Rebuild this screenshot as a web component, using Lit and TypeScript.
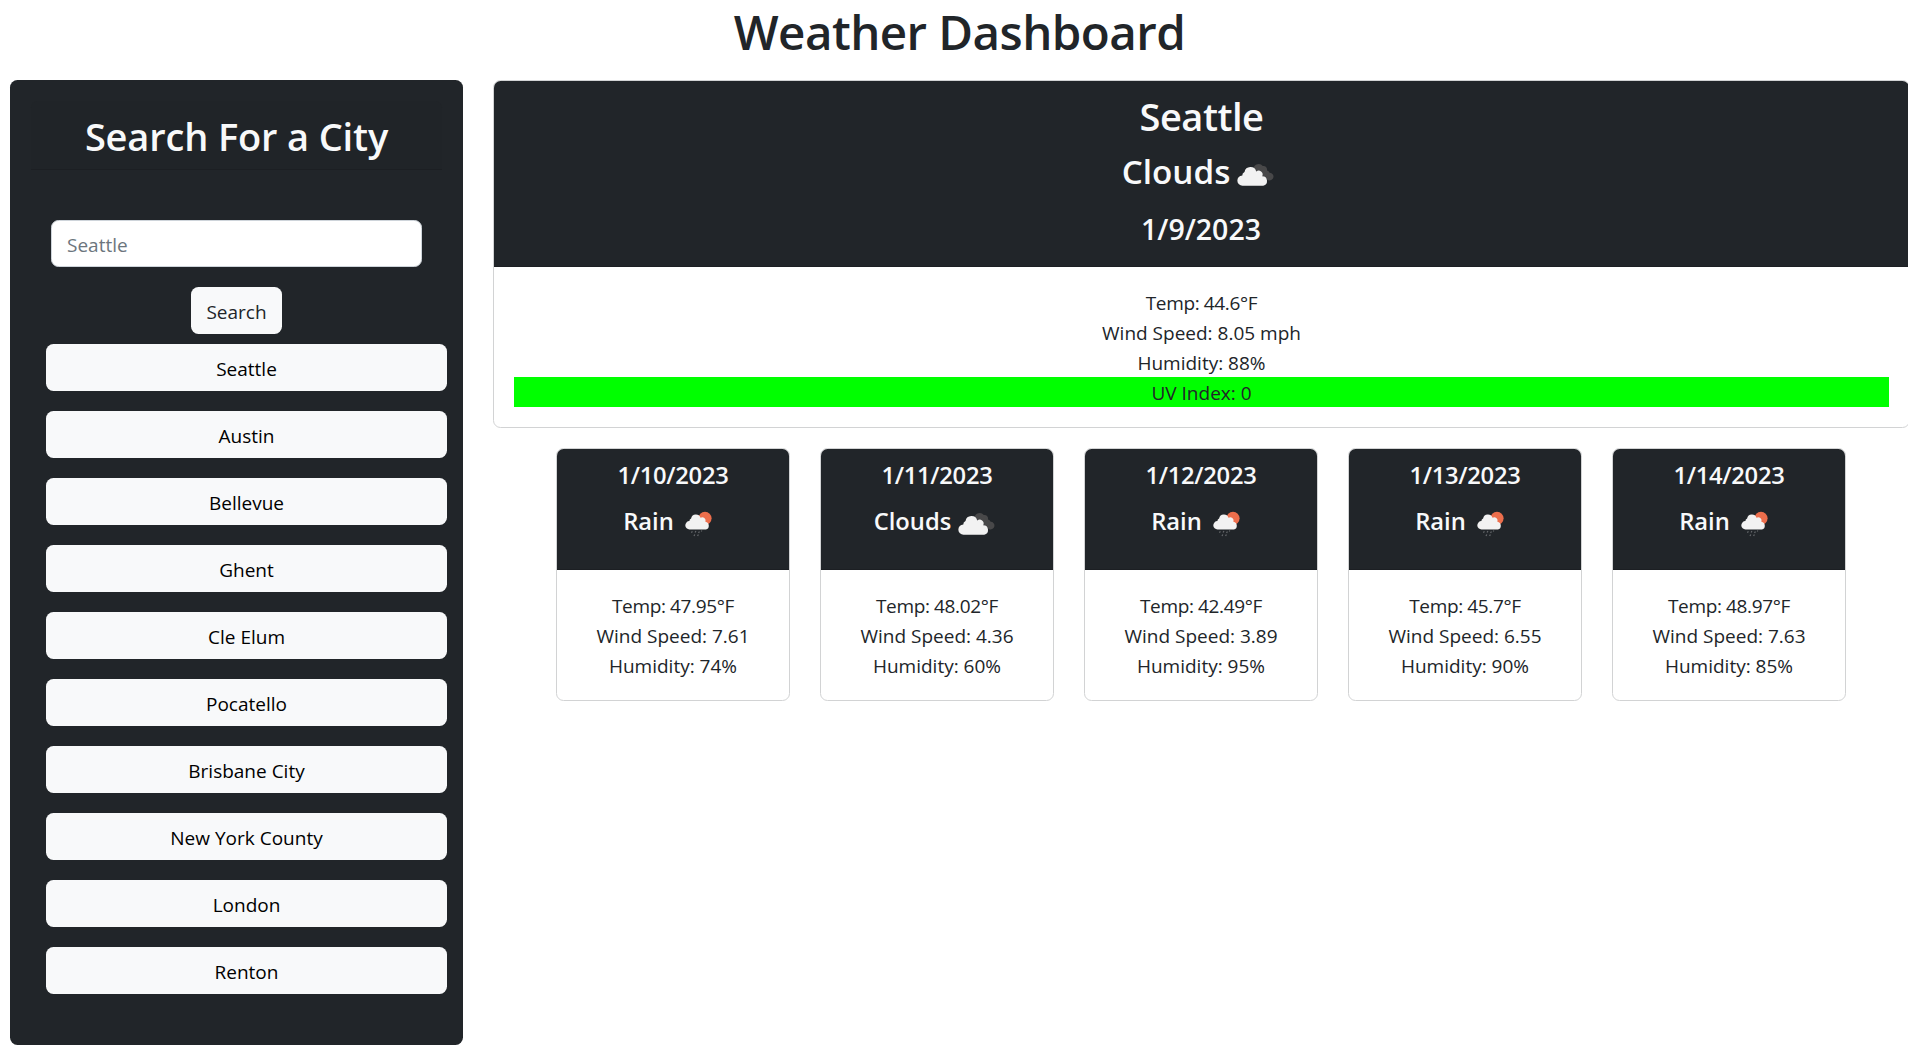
import { LitElement, html, css, svg } from "lit";
import { customElement, property } from "lit/decorators.js";

interface Forecast {
  date: string;
  sky: string;
  temp: string;
  wind: string;
  humidity: string;
}

const CITIES = [
  "Seattle", "Austin", "Bellevue", "Ghent", "Cle Elum",
  "Pocatello", "Brisbane City", "New York County", "London", "Renton",
];

const FORECAST: Forecast[] = [
  { date: "1/10/2023", sky: "Rain", temp: "47.95", wind: "7.61", humidity: "74" },
  { date: "1/11/2023", sky: "Clouds", temp: "48.02", wind: "4.36", humidity: "60" },
  { date: "1/12/2023", sky: "Rain", temp: "42.49", wind: "3.89", humidity: "95" },
  { date: "1/13/2023", sky: "Rain", temp: "45.7", wind: "6.55", humidity: "90" },
  { date: "1/14/2023", sky: "Rain", temp: "48.97", wind: "7.63", humidity: "85" },
];

const clouds = svg`
  <path fill="#484849" d="M23.5 18.5a5.2 5.2 0 0 1 9.3-2.4a3.6 3.6 0 0 1 4.2 4.3a3.8 3.8 0 0 1 2.6 2.4a3.8 3.8 0 1 1-1.8 7.1l-8-6z"/>
  <path fill="#f2f2f2" d="M12.6 35.7a5.1 5.1 0 0 1-.3-10.2a3.6 3.6 0 0 1 2.2-3.6a6.1 6.1 0 0 1 11.8-.5a4 4 0 0 1 6 4.8a4.8 4.8 0 0 1 .9 9.5z"/>
`;

const rain = svg`
  <circle cx="31" cy="19.3" r="6.6" fill="#ec6e4c"/>
  <path fill="#f2f2f2" d="M15.6 30.5a4.2 4.2 0 0 1-.2-8.4a3 3 0 0 1 1.7-2.7a4.9 4.9 0 0 1 9.4-.6a3.3 3.3 0 0 1 4.9 3.9a4 4 0 0 1 .5 7.8z"/>
  <path stroke="#65686b" stroke-width="1.2" fill="none" d="M18.3 32.2l-.8 1.6M21.9 31.9l-.8 1.6M25.4 32.4l-.8 1.6M27.8 31.5l-.5 1M20.8 35.4l-.8 1.6M24.4 35.4l-.8 1.6"/>
`;

@customElement("weather-icon")
class WeatherIcon extends LitElement {
  @property() sky = "Clouds";

  static styles = css`
    :host { display: block; width: 50px; height: 50px; flex: none; }
    svg { display: block; }
  `;

  render() {
    return html`<svg width="50" height="50" viewBox="0 0 50 50">${this.sky === "Rain" ? rain : clouds}</svg>`;
  }
}

@customElement("app-root")
class AppRoot extends LitElement {
  static styles = css`
    :host {
      display: block;
      width: 100%;
      height: 1055px;
      overflow: hidden;
      background: #fff;
      color: #212529;
      font-family: "Open Sans", "Noto Sans", sans-serif;
      font-size: 19px;
      line-height: 28px;
      text-align: center;
    }
    * { box-sizing: border-box; }
    h1, h2, h3, h4, h5, p { margin: 0; font-weight: 600; white-space: nowrap; }
    .title { height: 60px; padding: 3px 0 0 11px; font-size: 47.5px; line-height: 57px; letter-spacing: -.55px; }
    .layout { display: flex; align-items: flex-start; padding: 20px 0 0 10px; }
    .sidebar {
      width: 453px;
      height: 965px;
      flex: none;
      padding: 21px;
      border-radius: 7.5px;
      background: #212529;
    }
    .search-head {
      height: 69px;
      padding: 12px 0 0;
      border-bottom: 1px solid #1c1f23;
      border-radius: 6.5px 6.5px 0 0;
      background: #202428;
      color: #f8f9fa;
      font-size: 38px;
      line-height: 46px;
      letter-spacing: -.15px;
    }
    .search { display: flex; flex-direction: column; align-items: center; gap: 20px; padding: 50px 20px 0; }
    .field, .btn {
      height: 47px;
      border-radius: 7.5px;
      font: inherit;
      line-height: 28px;
      margin: 0;
    }
    .field {
      width: 371px;
      padding: 2px 15px 0;
      border: 1px solid #ced4da;
      background: #fff;
      color: #212529;
    }
    .field::placeholder { color: #6c757d; opacity: 1; }
    .btn { display: block; padding: 2px 0 0; border: 0; background: #f8f9fa; color: #000; }
    .submit { width: 91px; color: #212529; }
    .history { display: grid; gap: 20px; width: 401px; margin: 10px 0 0 15px; }
    .main { flex: none; width: 1417px; margin-left: 30px; }
    .card { border: 1px solid #d2d3d4; border-radius: 7.5px; background: #fff; overflow: hidden; }
    .head { background: #212529; color: #f8f9fa; border-bottom: 1px solid #1c1f23; padding-top: 10px; }
    .today .head { height: 186px; }
    .city { height: 48px; padding-top: 2px; font-size: 38px; line-height: 46px; letter-spacing: -.5px; }
    .sky { display: flex; justify-content: center; height: 50px; margin-top: 10px; }
    .today .sky { height: 51px; padding-right: 1px; font-size: 33.25px; line-height: 44px; }
    .today .sky weather-icon { margin-top: 1px; }
    .date { height: 36px; margin-top: 10px; padding-top: 1px; font-size: 28.5px; line-height: 36px; }
    .today .date { padding-right: 1px; }
    .body { padding: 20px; }
    .body p { height: 30px; padding-top: 2px; font-weight: 400; }
    .body .temp { letter-spacing: -.36px; }
    .body .uv { background: #0f0; }
    .days { display: flex; gap: 30px; margin: 20px 0 0 63px; }
    .day { width: 234px; height: 253px; }
    .day .head { height: 121px; }
    .day .date { height: 30px; margin-top: 0; padding-top: 2px; font-size: 23.75px; line-height: 28px; letter-spacing: -.3px; }
    .day .sky { padding-left: 1px; font-size: 23.75px; line-height: 45px; }
  `;

  render() {
    return html`
      <h1 class="title">Weather Dashboard</h1>
      <div class="layout">
        <aside class="sidebar">
          <h2 class="search-head">Search For a City</h2>
          <div class="search">
            <input class="field" placeholder="Seattle" />
            <button class="btn submit">Search</button>
          </div>
          <div class="history">${CITIES.map((c) => html`<button class="btn">${c}</button>`)}</div>
        </aside>
        <main class="main">
          <section class="card today">
            <div class="head">
              <h2 class="city">Seattle</h2>
              <h3 class="sky">Clouds<weather-icon sky="Clouds"></weather-icon></h3>
              <h4 class="date">1/9/2023</h4>
            </div>
            <div class="body">
              <p class="temp">Temp: 44.6°F</p>
              <p>Wind Speed: 8.05 mph</p>
              <p>Humidity: 88%</p>
              <p class="uv">UV Index: 0</p>
            </div>
          </section>
          <section class="days">
            ${FORECAST.map((d) => html`
              <article class="card day">
                <div class="head">
                  <h5 class="date">${d.date}</h5>
                  <h5 class="sky">${d.sky}<weather-icon sky=${d.sky}></weather-icon></h5>
                </div>
                <div class="body">
                  <p class="temp">Temp: ${d.temp}°F</p>
                  <p>Wind Speed: ${d.wind}</p>
                  <p>Humidity: ${d.humidity}%</p>
                </div>
              </article>`)}
          </section>
        </main>
      </div>
    `;
  }
}
